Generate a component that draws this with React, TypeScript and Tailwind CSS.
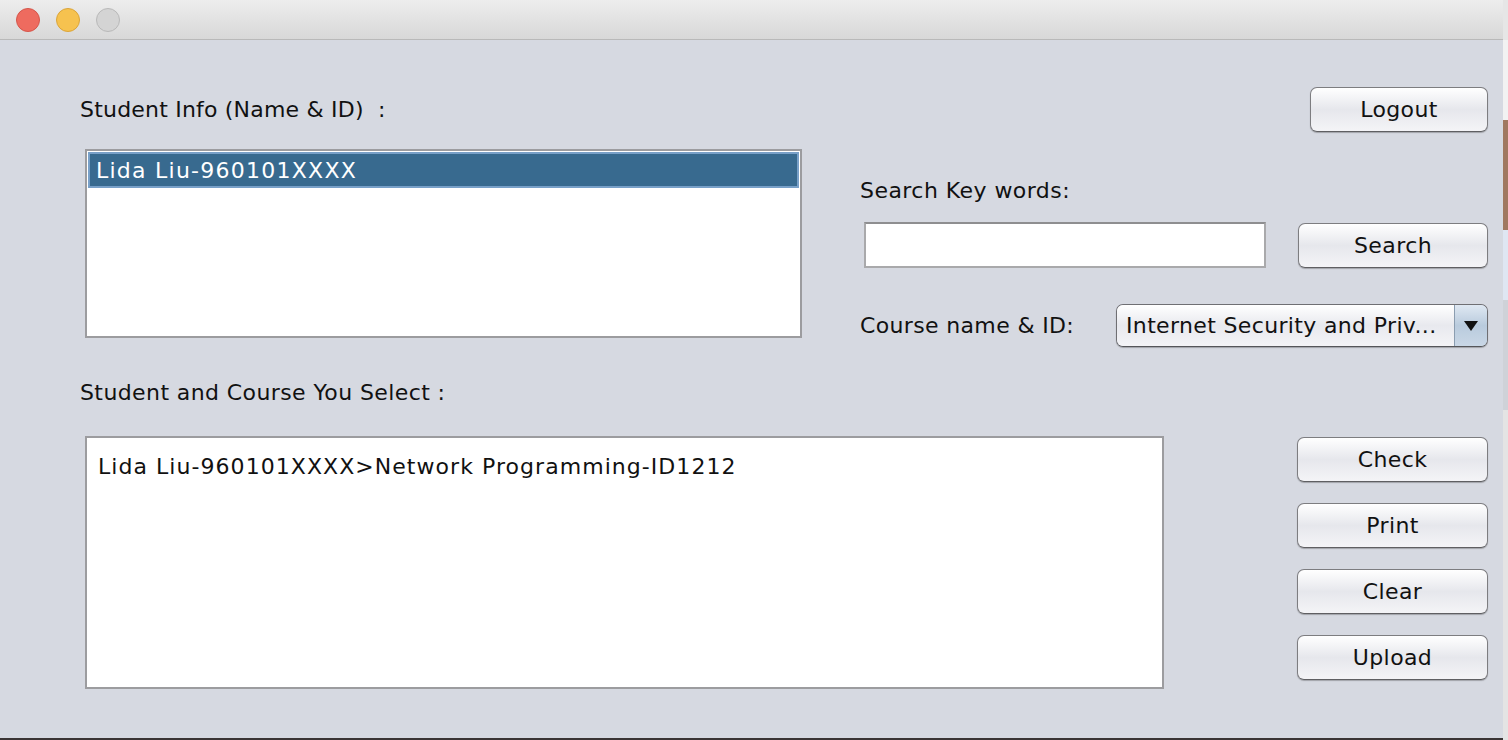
import React from "react";

const font = { fontFamily: '"DejaVu Sans", "Liberation Sans", sans-serif' };

function AquaButton({ label, w }: { label: string; w: string }) {
  return (
    <div
      className={`${w} h-[45px] rounded-[7px] border border-[#7d7d80] border-b-[#5f5f62] bg-gradient-to-b from-[#ffffff] via-[#e6e7ec] to-[#f4f4f7] shadow-[0_1px_1px_rgba(0,0,0,0.25)] flex items-center justify-center text-[22px] tracking-[0.4px] text-[#111]`}
    >
      {label}
    </div>
  );
}

export default function App() {
  return (
    <div className="w-[1508px] h-[740px] flex bg-[#3a3434] overflow-hidden" style={font}>
      <div className="w-[1503px] h-[738px] flex flex-col bg-[#d6d9e1]">
        {/* title bar */}
        <div className="h-[40px] shrink-0 bg-gradient-to-b from-[#ededed] to-[#d8d8d8] border-b border-[#b9b9b9] flex items-center pl-[16px] gap-[16px]">
          <div className="w-[24px] h-[24px] rounded-full bg-[#ee6b5f] border border-[#d5564b]" />
          <div className="w-[24px] h-[24px] rounded-full bg-[#f6c24f] border border-[#dba53a]" />
          <div className="w-[24px] h-[24px] rounded-full bg-[#d4d4d4] border border-[#b9b9b9]" />
        </div>

        {/* top section */}
        <div className="h-[307px] shrink-0 flex">
          <div className="w-[802px] pl-[80px] flex flex-col">
            <div className="mt-[56px] h-[28px] leading-[28px] text-[22px] tracking-[0.2px] text-[#111] whitespace-pre">
              Student Info (Name &amp; ID)  :
            </div>
            <div className="mt-[25px] ml-[5px] w-[717px] h-[189px] bg-white border-2 border-[#9c9c9f] p-[1px]">
              <div className="h-[36px] bg-[#386a8f] border-2 border-[#78a0c8] flex items-center pl-[6px] text-[22px] tracking-[1.25px] text-white">
                Lida Liu-960101XXXX
              </div>
            </div>
          </div>
          <div className="ml-[58px] w-[628px] flex flex-col">
            <div className="mt-[47px] flex justify-end">
              <AquaButton label="Logout" w="w-[178px]" />
            </div>
            <div className="mt-[45px] h-[28px] leading-[28px] text-[22px] tracking-[0.45px] text-[#111]">Search Key words:</div>
            <div className="mt-[17px] flex items-start">
              <div className="ml-[4px] w-[402px] h-[46px] bg-white border-2 border-[#a9a9ab] border-t-[#8e8e90]" />
              <div className="ml-[32px] mt-[1px]">
                <AquaButton label="Search" w="w-[190px]" />
              </div>
            </div>
            <div className="mt-[36px] flex items-center">
              <div className="text-[22px] tracking-[0.35px] text-[#111] leading-[28px]">Course name &amp; ID:</div>
              <div className="ml-auto w-[372px] h-[43px] rounded-[7px] border border-[#6f6f73] border-b-[#55565a] shadow-[0_1px_1px_rgba(0,0,0,0.25)] flex overflow-hidden">
                <div className="flex-1 bg-gradient-to-b from-[#ffffff] via-[#e8e9ee] to-[#f4f4f7] flex items-center pl-[9px] text-[22px] tracking-[0.35px] text-[#111]">
                  Internet Security and Priv...
                </div>
                <div className="w-[33px] bg-gradient-to-b from-[#dfe8f2] via-[#b9cbdd] to-[#c9d7e6] border-l border-[#8b9db0] flex items-center justify-center">
                  <svg width="14" height="10" viewBox="0 0 14 10">
                    <path d="M0 0 L14 0 L7 10 Z" fill="#111" />
                  </svg>
                </div>
              </div>
            </div>
          </div>
        </div>

        {/* bottom section */}
        <div className="pl-[80px] flex flex-col">
          <div className="mt-[32px] h-[28px] leading-[28px] text-[22px] tracking-[0.4px] text-[#111]">
            Student and Course You Select :
          </div>
          <div className="mt-[29px] flex items-start">
            <div className="ml-[5px] w-[1079px] h-[253px] bg-white border-2 border-[#9c9c9f] pl-[11px] pt-[15px] text-[22px] tracking-[1.05px] text-[#111] leading-[28px]">
              Lida Liu-960101XXXX&gt;Network Programming-ID1212
            </div>
            <div className="ml-[133px] mt-[1px] flex flex-col gap-[21px]">
              <AquaButton label="Check" w="w-[191px]" />
              <AquaButton label="Print" w="w-[191px]" />
              <AquaButton label="Clear" w="w-[191px]" />
              <AquaButton label="Upload" w="w-[191px]" />
            </div>
          </div>
        </div>
      </div>
      {/* desktop strip at the right */}
      <div className="w-[5px] h-[740px] flex flex-col">
        <div className="h-[40px] bg-[#e6e6e6]" />
        <div className="h-[80px] bg-[#f2f2f2]" />
        <div className="h-[110px] bg-[#a07860]" />
        <div className="h-[70px] bg-[#dfe6f2]" />
        <div className="h-[110px] bg-[#cfd2d8]" />
        <div className="flex-1 bg-[#e4e4e4]" />
      </div>
    </div>
  );
}
